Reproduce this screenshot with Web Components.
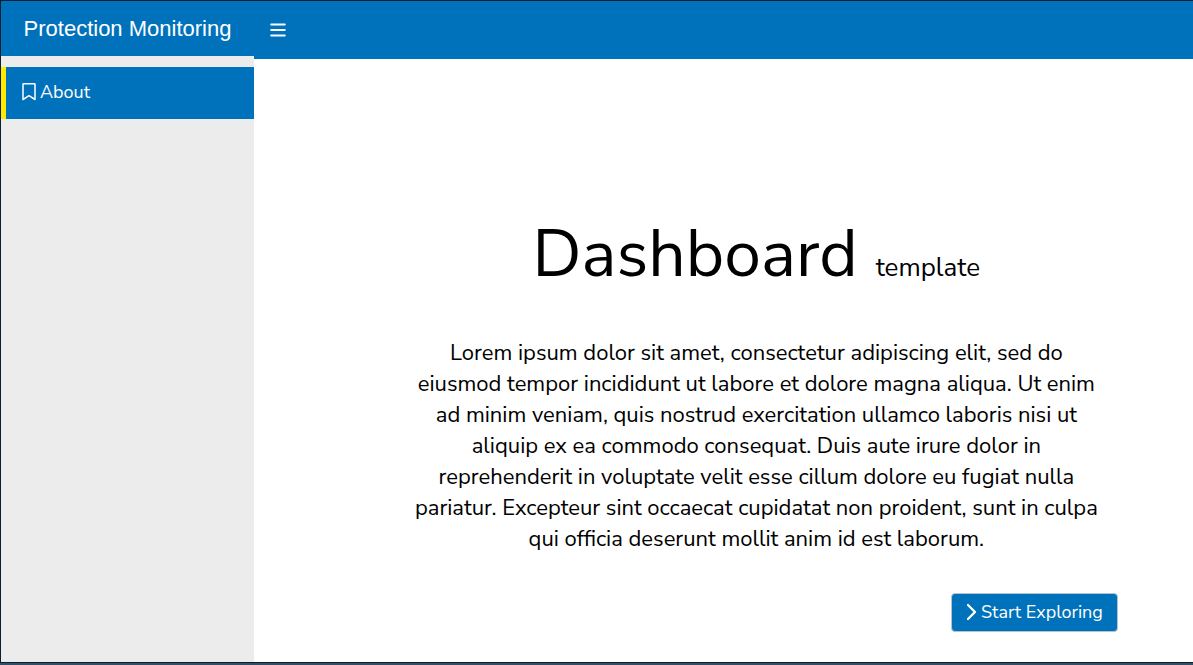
<!DOCTYPE html>
<html lang="en">
<head>
<meta charset="utf-8">
<meta name="viewport" content="width=device-width, initial-scale=1">
<title>Protection Monitoring</title>
<style>
  html { background: #2f5068; }
  body { margin: 0; font-family: "Nunito Sans", Nunito, Lato, sans-serif; font-size: 18px; color: #000; }
</style>
</head>
<body>
<dashboard-app>
  <side-nav slot="side" heading="Protection Monitoring">
    <nav-item href="#about">About</nav-item>
  </side-nav>
  <top-bar slot="top"></top-bar>
  <intro-panel slot="main">
    <span slot="title">Dashboard</span>
    <span slot="subtitle">template</span>
    <span slot="text">Lorem ipsum dolor sit amet, consectetur adipiscing elit, sed do eiusmod tempor incididunt ut labore et dolore magna aliqua. Ut enim ad minim veniam, quis nostrud exercitation ullamco laboris nisi ut aliquip ex ea commodo consequat. Duis aute irure dolor in reprehenderit in voluptate velit esse cillum dolore eu fugiat nulla pariatur. Excepteur sint occaecat cupidatat non proident, sunt in culpa qui officia deserunt mollit anim id est laborum.</span>
    <action-button slot="action">Start Exploring</action-button>
  </intro-panel>
</dashboard-app>
<script>
const define = (name, html, setup) => customElements.define(name, class extends HTMLElement {
  constructor() {
    super();
    this.attachShadow({ mode: 'open' }).innerHTML = html;
  }
  connectedCallback() { if (setup) setup(this, this.shadowRoot); }
});

define('dashboard-app', `
  <style>
    :host { display: flex; box-sizing: border-box; min-height: calc(100vh - 2px); background: #fff; border: solid #0b1f2e; border-width: 1px 0 1px 1px; }
    .side { display: flex; flex: 0 0 253px; background: #ececec; }
    .page { flex: 1; min-width: 0; }
    .side.hidden { display: none; }
  </style>
  <div class="side"><slot name="side"></slot></div>
  <div class="page"><slot name="top"></slot><slot name="main"></slot></div>
`, (el, root) => {
  el.addEventListener('toggle-menu', () => root.querySelector('.side').classList.toggle('hidden'));
});

define('side-nav', `
  <style>
    :host { display: block; flex: 1; }
    header { height: 55px; background: #0072bc; color: #fff; text-align: center; font: 22px/55px "Liberation Sans", Arial, sans-serif; }
    nav { padding-top: 11px; }
  </style>
  <header></header>
  <nav><slot></slot></nav>
`, (el, root) => { root.querySelector('header').textContent = el.getAttribute('heading'); });

define('nav-item', `
  <style>
    :host { display: block; }
    a { display: flex; align-items: center; gap: 4px; height: 52px; box-sizing: border-box; padding: 0 16px 2px; border-left: 5px solid #ffeb00; background: #0072bc; color: #fff; text-decoration: none; }
    svg { display: block; }
  </style>
  <a><svg width="14" height="18" viewBox="0 0 14 18" fill="none" stroke="#fff" stroke-width="1.5" stroke-linejoin="round" aria-hidden="true"><path d="M1 16.500V1.300Q1 .7 1.800 .7H12.200Q13 .7 13 1.300V16.500L7 12.700Z"/></svg><slot></slot></a>
`, (el, root) => { root.querySelector('a').href = el.getAttribute('href'); });

define('top-bar', `
  <style>
    :host { display: flex; align-items: center; height: 58px; padding-left: 16px; background: #0072bc; }
    button { display: block; padding: 0; border: 0; background: none; cursor: pointer; }
    svg { display: block; }
  </style>
  <button type="button" aria-label="Toggle sidebar"><svg width="16" height="14" viewBox="0 0 16 14" fill="none" stroke="#fff" stroke-width="2.200" stroke-linecap="round"><path d="M1.300 1.500H14.700M1.300 7H14.700M1.300 12.500H14.700"/></svg></button>
`, (el, root) => {
  root.querySelector('button').onclick = () => el.dispatchEvent(new CustomEvent('toggle-menu', { bubbles: true }));
});

define('intro-panel', `
  <style>
    :host { display: block; padding: 147px 8% 24px 15%; }
    h1 { margin: 0; display: flex; justify-content: center; align-items: baseline; gap: 18px; font-weight: 400; font-size: 66px; line-height: 96px; }
    small { font-size: 26px; line-height: 36px; }
    p { margin: 36px 16px 38px; text-align: center; font-size: 22px; line-height: 31px; }
    footer { display: flex; justify-content: flex-end; }
  </style>
  <h1><slot name="title"></slot><small><slot name="subtitle"></slot></small></h1>
  <p><slot name="text"></slot></p>
  <footer><slot name="action"></slot></footer>
`);

define('action-button', `
  <style>
    :host { display: block; }
    button { display: flex; align-items: center; gap: 4px; height: 39px; padding: 0 14px 2px; border: 1px solid #b8c4cc; border-radius: 4px; background: #0072bc; color: #fff; font: inherit; cursor: pointer; }
    svg { display: block; }
  </style>
  <button type="button"><svg width="11" height="18" viewBox="0 0 11 18" fill="none" stroke="#fff" stroke-width="2.300" stroke-linecap="round" stroke-linejoin="round" aria-hidden="true"><path d="M2 2L9 9L2 16"/></svg><slot></slot></button>
`);
</script>
</body>
</html>
